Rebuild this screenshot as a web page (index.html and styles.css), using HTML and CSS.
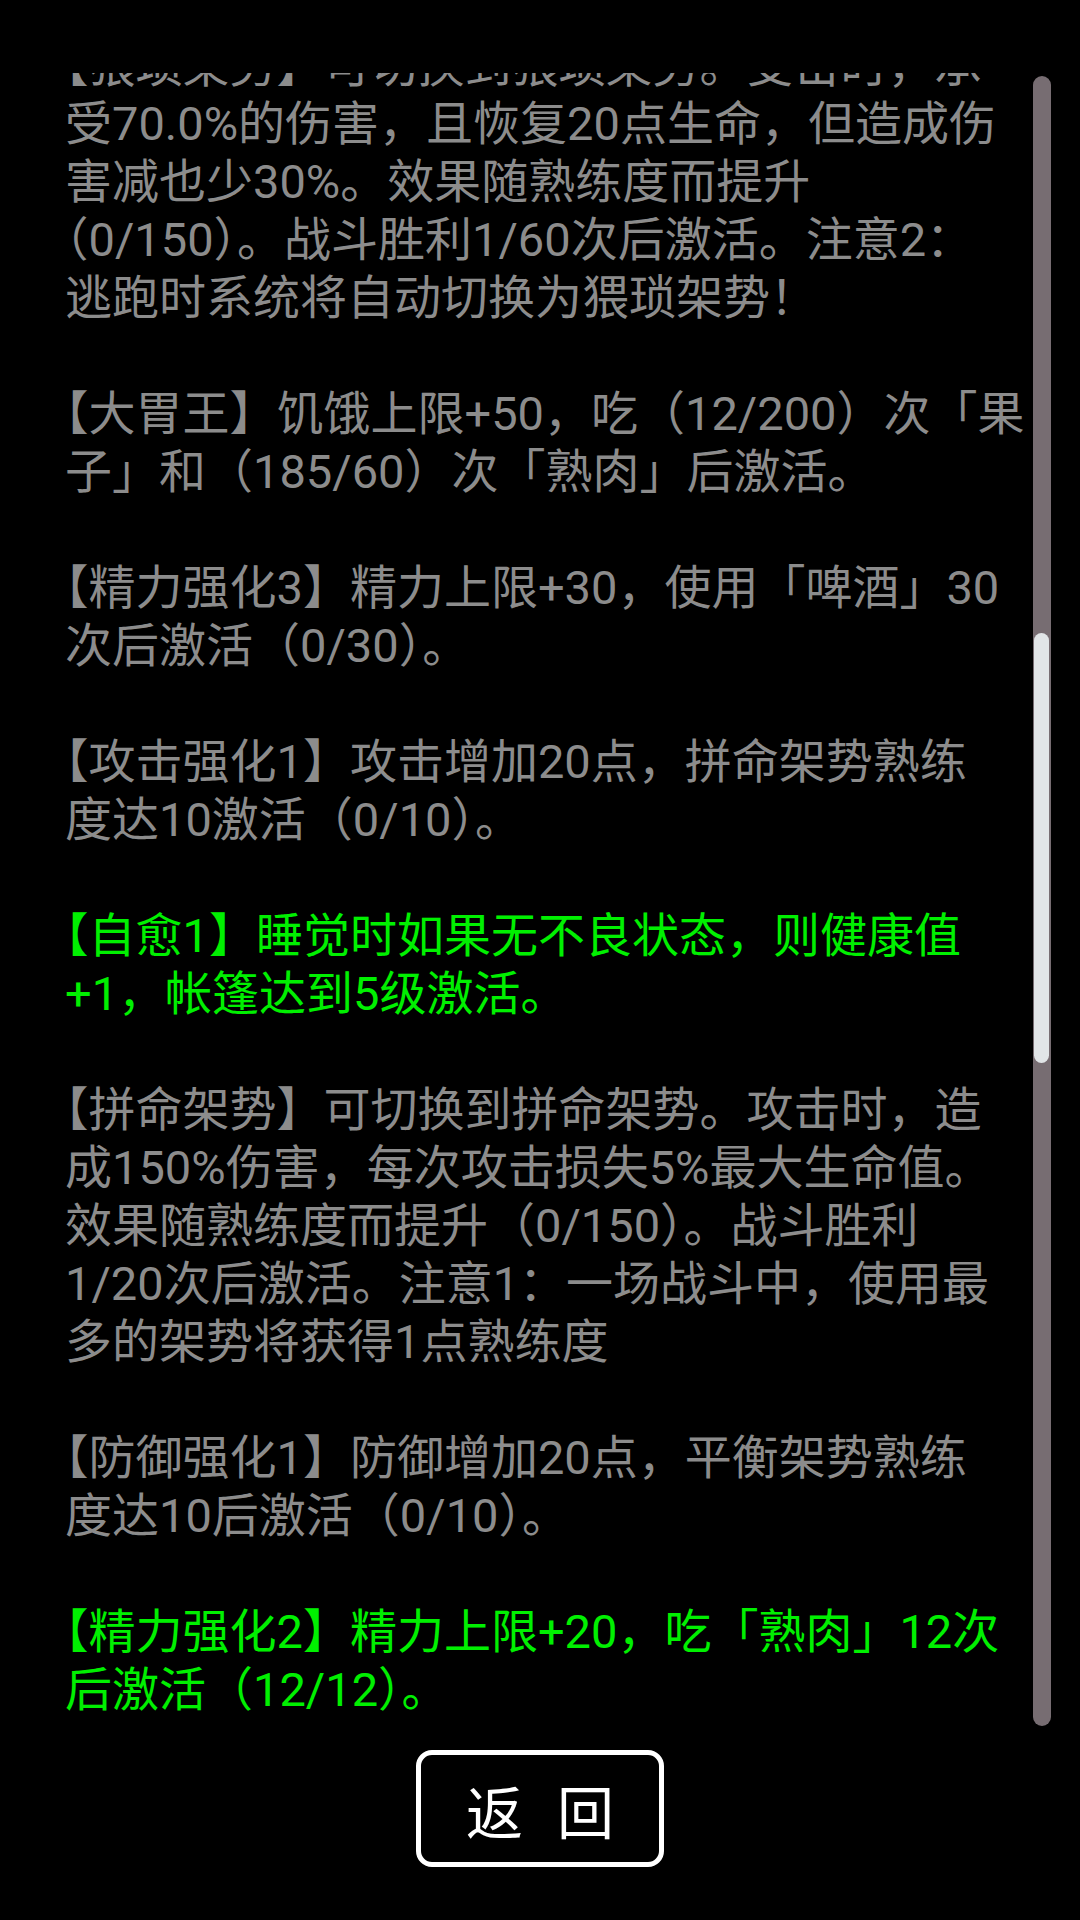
FILE: index.html
```html
<!DOCTYPE html>
<html lang="zh-CN">
<head>
    <meta charset="UTF-8">
    <title>天赋 - 详情</title>
    <link rel="stylesheet" href="styles.css">
</head>
<body>

<div class="screen">
    <div class="scroll-box">
        <div class="talent-list">
            <p class="talent"><span class="tag">【猥琐架势】</span>可切换到猥琐架势。受击时，承<br>受70.0%的伤害，且恢复20点生命，但造成伤<br>害减也少30%。效果随熟练度而提升<br>（0/150）。战斗胜利1/60次后激活。注意2：<br>逃跑时系统将自动切换为猥琐架势！</p>

            <p class="talent"><span class="tag">【大胃王】</span>饥饿上限+50，吃（12/200）次「果<br>子」和（185/60）次「熟肉」后激活。</p>

            <p class="talent"><span class="tag">【精力强化3】</span>精力上限+30，使用「啤酒」30<br>次后激活（0/30）。</p>

            <p class="talent"><span class="tag">【攻击强化1】</span>攻击增加20点，拼命架势熟练<br>度达10激活（0/10）。</p>

            <p class="talent active"><span class="tag">【自愈1】</span>睡觉时如果无不良状态，则健康值<br>+1，帐篷达到5级激活。</p>

            <p class="talent"><span class="tag">【拼命架势】</span>可切换到拼命架势。攻击时，造<br>成150%伤害，每次攻击损失5%最大生命值。<br>效果随熟练度而提升（0/150）。战斗胜利<br>1/20次后激活。注意1：一场战斗中，使用最<br>多的架势将获得1点熟练度</p>

            <p class="talent"><span class="tag">【防御强化1】</span>防御增加20点，平衡架势熟练<br>度达10后激活（0/10）。</p>

            <p class="talent active"><span class="tag">【精力强化2】</span>精力上限+20，吃「熟肉」12次<br>后激活（12/12）。</p>
        </div>

        <!-- fake scrollbar, list is scrolled to the middle -->
        <div class="scroll-track">
            <div class="scroll-thumb"></div>
        </div>
    </div>

    <div class="footer">
        <button class="back-btn" onclick="history.back()">返回</button>
    </div>
</div>

</body>
</html>
```

FILE: styles.css
```css
html, body {
    margin: 0;
    padding: 0;
    background: #000;
}
body {
    width: 1080px;
    height: 1920px;
    overflow: hidden;
    font-family: Roboto, "Noto Sans CJK SC", sans-serif;
}
.screen {
    display: flex;
    flex-direction: column;
    height: 100%;
}
.scroll-box {
    position: relative;
    margin-top: 73px;
    height: 1653px;
    overflow: hidden;
}
.talent-list {
    margin-top: -36px;
    padding-left: 65px;
}
.talent {
    margin: 0 0 58px 0;
    font-size: 47px;
    line-height: 58px;
    color: #8c8c8c;
    white-space: nowrap;
    text-spacing-trim: trim-start;
}
.talent.active {
    color: #00f000;
}
.scroll-track {
    position: absolute;
    top: 3px;
    bottom: 0;
    right: 29px;
    width: 18px;
    border-radius: 9px;
    background: #776d72;
}
.scroll-thumb {
    position: absolute;
    top: 557px;
    left: 1px;
    width: 15px;
    height: 430px;
    border-radius: 8px;
    background: #e1e5e7;
}
.footer {
    display: flex;
    justify-content: center;
    padding-top: 24px;
}
.back-btn {
    width: 248px;
    height: 117px;
    background: #000;
    color: #fff;
    border: 5px solid #fff;
    border-radius: 16px;
    font-family: "Noto Sans CJK SC", sans-serif;
    font-size: 57px;
    letter-spacing: 34px;
    text-indent: 34px;
    padding: 0;
    cursor: pointer;
}
```
